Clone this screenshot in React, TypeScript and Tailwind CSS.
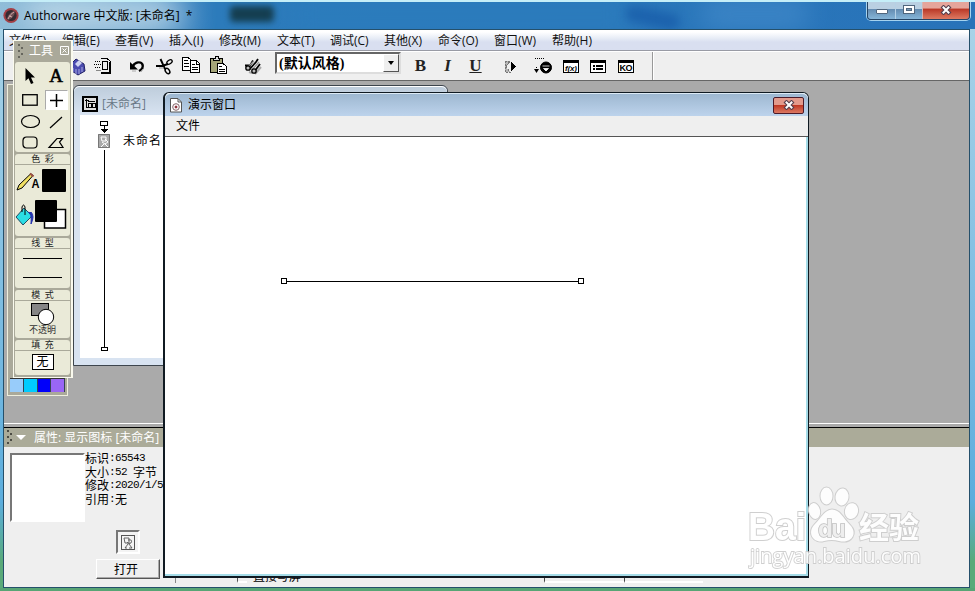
import type { ReactNode } from "react";
import clsx from "clsx";

const MENUS = [
  { label: "文件(F)", width: "w-[53px]" },
  { label: "编辑(E)", width: "w-[53px]" },
  { label: "查看(V)", width: "w-[54px]" },
  { label: "插入(I)", width: "w-[50px]" },
  { label: "修改(M)", width: "w-[58px]" },
  { label: "文本(T)", width: "w-[53px]" },
  { label: "调试(C)", width: "w-[54px]" },
  { label: "其他(X)", width: "w-[54px]" },
  { label: "命令(O)", width: "w-[56px]" },
  { label: "窗口(W)", width: "w-[58px]" },
  { label: "帮助(H)", width: "w-[53px]" },
];

const SWATCHES = ["bg-[#98ccfa]", "bg-[#00ccff]", "bg-[#0000fa]", "bg-[#9966f5]"];

function Icon({ children, w = 20, h = 20, crisp = true }: { children: ReactNode; w?: number; h?: number; crisp?: boolean }) {
  return (
    <svg
      width={w}
      height={h}
      viewBox={`0 0 ${w} ${h}`}
      fill="none"
      stroke="#000"
      className="block shrink-0"
      shapeRendering={crisp ? "crispEdges" : "auto"}
    >
      {children}
    </svg>
  );
}

function Slot({ children, className }: { children: ReactNode; className?: string }) {
  return <button className={clsx("flex h-[27px] w-[27px] shrink-0 items-center justify-center", className)}>{children}</button>;
}

function CloseX() {
  return (
    <svg width="12" height="10" viewBox="0 0 12 10">
      <path d="M3.5 2.5 L8.500 7.500 M8.500 2.500 L3.500 7.500" stroke="#553f4d" strokeWidth="4.2" strokeLinecap="square" />
      <path d="M3.5 2.5 L8.500 7.500 M8.500 2.500 L3.500 7.500" stroke="#fff" strokeWidth="2" strokeLinecap="square" />
    </svg>
  );
}

function TitleBar() {
  return (
    <div className="relative flex h-[29px] shrink-0 items-start overflow-hidden border-t-2 border-[#c5eef8] bg-linear-to-r from-[#8fbcd8] from-0% via-[#2c7bbb] via-22% to-[#2873b9] to-100%">
      <div className="absolute -top-2 left-6 h-10 w-40 rounded-full bg-[#d0e5ee] opacity-80 blur-lg" />
      <div className="absolute top-1 left-[230px] h-4 w-[44px] rounded bg-[#153e50] blur-[3px]" />
      <div className="absolute -top-2 left-[290px] h-10 w-[340px] bg-[#2c7dbd] opacity-70 blur-md" />
      <div className="absolute top-2 left-[625px] h-4 w-[55px] rotate-12 rounded-full bg-[#1355a5] opacity-60 blur-[5px]" />
      <div className="absolute -top-1 left-[700px] h-8 w-[110px] rounded-full bg-[#438bcb] opacity-70 blur-md" />
      <div className="relative flex h-[27px] items-center pl-[3px]">
        <svg width="16" height="17" viewBox="0 0 16 17">
          <circle cx="8" cy="8.5" r="7.6" fill="#a33f45" />
          <circle cx="8" cy="8.5" r="5.6" fill="#332b32" />
          <path d="M4 12 C5 8 7 5 12 4 C12 8 9 12 5 13 Z" fill="#6d4e53" />
          <path d="M5 12 C7 8 8 7 11 5 M6 9 L9 10" stroke="#d3aaa8" fill="none" />
        </svg>
        <span className="ml-[5px] text-[12px] whitespace-pre text-black">Authorware 中文版: [未命名]  *</span>
      </div>
      <div className="absolute -top-0.5 left-[867px] flex h-5 overflow-hidden rounded-b-[4px] border border-t-0 border-[#254464] shadow-[0_0_0_1px_#a5d3ef]">
        <div className="flex w-[28px] items-center justify-center border-r border-[#b5d0e5] bg-linear-to-b from-[#bad0e2] from-45% via-[#658db2] via-50% to-[#86b6d9]">
          <div className="mt-1 h-[5px] w-3 rounded-[1px] border border-[#50667d] bg-white" />
        </div>
        <div className="flex w-[27px] items-center justify-center border-r border-[#d6b5b3] bg-linear-to-b from-[#bad0e2] from-45% via-[#658db2] via-50% to-[#86b6d9]">
          <div className="flex h-[9px] w-3 items-center justify-center border border-[#50667d] bg-white">
            <div className="h-[3px] w-1.5 border border-[#50667d] bg-[#7798b4]" />
          </div>
        </div>
        <div className="flex w-[46px] items-center justify-center bg-linear-to-b from-[#e5a59b] from-40% via-[#bb3a29] via-50% to-[#dd7962]">
          <CloseX />
        </div>
      </div>
    </div>
  );
}

function MenuBar() {
  return (
    <nav className="flex h-[21px] shrink-0 items-center border-b border-[#999ba5] bg-linear-to-b from-white from-10% via-[#e8edf6] via-40% to-[#d9dff0] to-60% pt-px pl-[5px] text-[12px] text-[#111]">
      {MENUS.map((m) => (
        <span key={m.label} className={clsx("shrink-0 whitespace-nowrap", m.width)}>
          {m.label}
        </span>
      ))}
    </nav>
  );
}

function Toolbar() {
  return (
    <div className="flex h-[30px] shrink-0 items-start border-t border-b border-t-white border-b-[#666] bg-[#efefef] pl-[60px]">
      <Slot>
        <Icon crisp={false}>
          <path d="M2 9 L8 3 L16 8 L17 15 L10 19 L4 15 Z" fill="#4b4baf" stroke="#222267" />
          <path d="M7 8 L11 4 L14 7 L10 11 Z" fill="#cfd2f1" stroke="none" />
          <path d="M5 12 V16 M8 13 V18 M11 13 V18 M14 11 V16" stroke="#aaaadf" />
        </Icon>
      </Slot>
      <Slot className="-ml-[2px]">
        <Icon>
          <path d="M7.5 2.5 H14 L17.5 5.5 V17.5 H7.500" strokeWidth="1" />
          <path d="M17 6 V17 H8" strokeWidth="2" />
          <path d="M9.5 5.5 H14.5 V13.5 H9.5 Z" />
          <path d="M2 5.5 H7 M1 8.5 H8 M2 11.5 H8" strokeDasharray="1 1" />
          <path d="M3 14.5 H8" stroke="#888" />
        </Icon>
      </Slot>
      <Slot className="ml-[7px]">
        <Icon crisp={false}>
          <path d="M6 10 C8 6 14 5 15.500 8.500 C16.500 11.500 15 13.500 12 15" strokeWidth="2.4" />
          <path d="M3 6 V13.500 H11 Z" fill="#000" stroke="none" />
          <path d="M5 15 H9 M16 13 L14 16" stroke="#aaa" />
        </Icon>
      </Slot>
      <Slot>
        <Icon crisp={false}>
          <path d="M6.500 3 L11 13 M2 10 H8 L14 8" strokeWidth="1.9" />
          <path d="M5 12 L10 12" stroke="#999" />
          <ellipse cx="15.500" cy="6" rx="3" ry="1.800" transform="rotate(-35 15.500 6)" strokeWidth="1.300" />
          <ellipse cx="13.500" cy="15" rx="1.900" ry="3" transform="rotate(-35 13.500 15)" strokeWidth="1.500" />
        </Icon>
      </Slot>
      <Slot>
        <Icon>
          <path d="M1.5 1.5 H7 L10.5 4.5 V14.5 H1.5 Z" fill="#fff" />
          <path d="M3 4.5 H7 M3 7.5 H8 M3 10.5 H8" />
          <path d="M9.5 4.5 H15 L18.5 7.5 V16.5 H9.5 Z" fill="#fff" />
          <path d="M15.500 5 V8 H18 M11 8.5 H14 M11 11.5 H17 M11 13.5 H17" />
        </Icon>
      </Slot>
      <Slot>
        <Icon>
          <path d="M2.5 2.5 H14.5 V16.5 H2.5 Z" fill="#a5a578" />
          <path d="M5.5 4.5 V2 H7 V.5 H10 V2 H11.5 V4.5 Z" fill="#ddd" />
          <path d="M9.5 7.5 H15 L18.500 10.5 V17.5 H9.5 Z" fill="#fff" />
          <path d="M11 10.5 H14 M11 13.5 H17 M11 15.5 H17" />
        </Icon>
      </Slot>
      <Slot className="ml-2">
        <Icon crisp={false}>
          <path d="M12 18 L18 11 M6 16 L9 17" stroke="#aaa" strokeWidth="2" />
          <path d="M2 9.500 H7 L10 4.500 M6 14 L13 6 L15 3 M11 16 L17 8" strokeWidth="1.800" />
          <path d="M4 12 L11 5 M9 14 L16 6" stroke="#999" strokeWidth="1.300" />
          <circle cx="5" cy="12" r="2.200" fill="#bbb" strokeWidth="1.300" />
          <circle cx="11" cy="15" r="2.200" fill="#bbb" strokeWidth="1.300" />
        </Icon>
      </Slot>
      <div className="ml-[9px] flex h-[22px] w-[126px] shrink-0 border-2 border-t-[#666] border-r-[#ddd] border-b-[#ddd] border-l-[#666] bg-white">
        <span className="flex-1 pl-[2px] font-['Liberation_Serif','Noto_Sans_CJK_SC',serif] text-[14px] leading-[19px] font-bold whitespace-nowrap text-black">
          (默认风格)
        </span>
        <span className="flex h-[18px] w-4 items-center justify-center border border-t-white border-r-[#555] border-b-[#555] border-l-white bg-[#efefef]">
          <span className="border-x-[3.5px] border-t-4 border-x-transparent border-t-black" />
        </span>
      </div>
      <div className="ml-[6px] flex font-['Liberation_Serif',serif] text-[17px] leading-none font-bold text-[#222] text-shadow-[1px_1px_#aaa]">
        <Slot>B</Slot>
        <Slot className="italic">I</Slot>
        <Slot className="ml-px underline">U</Slot>
      </div>
      <Slot className="ml-2">
        <Icon>
          <path d="M4 5 H9 L5 10.500 L9 16 H4 Z" fill="#b5b5b5" stroke="#777" strokeDasharray="2 1" />
          <path d="M10 5 V16 L15 10.5 Z" fill="#000" stroke="none" />
        </Icon>
      </Slot>
      <Slot className="ml-[6px]">
        <Icon crisp={false}>
          <path d="M1 2.5 H11 M2.5 11 V14" strokeDasharray="1 1" />
          <path d="M0 13 H5 L2.5 17 Z" fill="#000" stroke="none" />
          <circle cx="12" cy="11.5" r="5.5" fill="#000" />
          <path d="M8.5 10 H15.5 M9.500 12.5 H14.500 L12 15 Z" stroke="#fff" fill="#fff" strokeWidth=".8" />
        </Icon>
      </Slot>
      <Slot>
        <Icon>
          <rect x="2.5" y="4.5" width="15" height="12" fill="#fff" />
          <path d="M2 5.5 H18" strokeWidth="3" />
          <text x="4" y="14.5" fill="#000" stroke="none" fontSize="8" fontWeight="700" fontStyle="italic" textLength="12" className="font-['Liberation_Sans',sans-serif]">f(x)</text>
        </Icon>
      </Slot>
      <Slot>
        <Icon>
          <rect x="2.5" y="4.5" width="15" height="12" fill="#fff" />
          <path d="M2 5.5 H18" strokeWidth="3" />
          <path d="M5 10 H7 M8 10 H15 M5 13 H7 M8 13 H15" strokeWidth="2" />
        </Icon>
      </Slot>
      <Slot className="ml-px">
        <Icon>
          <rect x="2.5" y="4.5" width="15" height="12" fill="#fff" />
          <path d="M2 5.5 H18" strokeWidth="3" />
          <text x="3.5" y="15" fill="#000" stroke="none" fontSize="9" fontWeight="700" textLength="13" className="font-['Liberation_Sans',sans-serif]">KO</text>
        </Icon>
      </Slot>
      <div className="ml-[13px] h-full w-0.5 border-l border-[#999] bg-white" />
    </div>
  );
}

function FlowWindow() {
  return (
    <div className="absolute top-[85px] left-[73px] flex h-[281px] w-[375px] flex-col rounded-t-md border border-[#3d454d] bg-[#d8e3f1]">
      <div className="flex h-[29px] shrink-0 items-center gap-1 rounded-t-md border-t border-white bg-linear-to-b from-[#becddc] to-[#d8e3f1] pt-[5px] pl-2">
        <Icon w={16} h={16}>
          <rect x="1" y="1" width="14" height="14" fill="#ddd" strokeWidth="2" />
          <path d="M4.500 3 V7 M3 4.500 H7 M4.500 6.500 V11.500 H6 M6.500 7.500 H9.500 V11.500 H6.500 Z M10.500 7.500 H13 V11.500 H10.500 Z M6 5.500 H13" />
        </Icon>
        <span className="text-[12px] text-[#687786]">[未命名]</span>
      </div>
      <div className="mx-[6px] mb-[7px] flex flex-1 bg-white">
        <div className="ml-[18px] flex w-3 flex-col items-center pt-[6px]">
          <Icon w={12} h={13}>
            <path d="M2.5 0.5 H9.5 V4.5 H2.5 Z M6.500 5 V10" />
            <path d="M3 8 H10 L6.5 12 Z" fill="#000" stroke="none" />
          </Icon>
          <div className="flex h-[14px] w-3 shrink-0 bg-[#aaa]">
            <Icon w={12} h={14} crisp={false}>
              <path d="M.5 .5 H11.500 V13.500 H.5 Z" stroke="#777" />
              <path d="M3 3 H8 V7 H4 Z M7 5 L10 8 L7 10 L4 8 M6 10 L3 13 M7 10 L10 13" stroke="#fff" />
            </Icon>
          </div>
          <div className="mt-0.5 w-px flex-1 bg-black" />
          <div className="mb-[7px] h-1 w-[7px] shrink-0 border border-black bg-white" />
        </div>
        <span className="mt-[18px] ml-[13px] text-[12px] leading-4 tracking-[1px] text-black">未命名</span>
      </div>
    </div>
  );
}

function PresentationWindow() {
  return (
    <div className="absolute top-[92px] left-[163px] flex h-[486px] w-[646px] flex-col rounded-t-md border-2 border-t border-r border-[#101a22] bg-white">
      <div className="flex h-[23px] shrink-0 items-center rounded-t-md border-t border-[#dceaf5] bg-linear-to-b from-[#9eb8d1] to-[#bdd3ec] pr-1 pl-1">
        <Icon w={14} h={15} crisp={false}>
          <path d="M1.5 .5 H9 L12.5 4 V14 H1.5 Z" fill="#fff" stroke="#555" />
          <path d="M9 1 V4 H12" stroke="#555" />
          <circle cx="7" cy="9" r="3.3" fill="#fff" stroke="#826469" />
          <circle cx="7" cy="9" r="1" fill="#8a2934" stroke="#8a2934" />
        </Icon>
        <span className="ml-[5px] flex-1 text-[12px] text-black">演示窗口</span>
        <button className="flex h-[17px] w-[31px] items-center justify-center rounded-xs border border-[#4c1a28] bg-linear-to-b from-[#e39a8c] from-45% via-[#c03824] via-50% to-[#db7862]">
          <CloseX />
        </button>
      </div>
      <div className="h-[21px] shrink-0 border-b border-[#555] bg-[#efefef] pl-[11px] text-[12px] leading-[19px] text-black">文件</div>
      <div className="flex flex-1 items-start border-r-2 border-b-2 border-[#a5dce8] pt-[141px] pl-[116px]">
        <div className="flex items-center">
          <span className="size-1.5 border border-black bg-white" />
          <span className="h-px w-[291px] bg-black" />
          <span className="size-1.5 border border-black bg-white" />
        </div>
      </div>
    </div>
  );
}

function Section({ title, children, className }: { title: string; children: ReactNode; className?: string }) {
  return (
    <section className={clsx("flex shrink-0 flex-col rounded-[3px] bg-[#eaead8]", className)}>
      <h2 className="h-[11px] shrink-0 border-b border-[#aaa99a] text-center text-[9px] leading-[10px] whitespace-pre text-[#222]">{title}</h2>
      {children}
    </section>
  );
}

function ToolPalette() {
  return (
    <div className="absolute top-[40px] left-[13px] flex h-[338px] w-[60px] flex-col gap-0.5 border border-r-2 border-[#fafaee] bg-[#aaa99a] px-px pb-0.5">
      <header className="flex h-[19px] shrink-0 items-center text-[12px] text-white">
        <svg width="7" height="14" viewBox="0 0 7 14" fill="#66665d" className="ml-0.5">
          <path d="M1 0h2v2H1zM4 3h2v2H4zM1 6h2v2H1zM4 9h2v2H4zM1 12h2v2H1z" />
        </svg>
        <span className="ml-[5px]">工具</span>
        <svg width="9" height="9" viewBox="0 0 9 9" stroke="#fff" fill="none" className="ml-[7px]">
          <path d="M.5 .5 H8.5 V8.5 H.5 Z M2.5 2.5 L6.5 6.5 M6.5 2.5 L2.5 6.5" />
        </svg>
      </header>
      <div className="grid h-[90px] shrink-0 grid-cols-2 grid-rows-[27px_22px_21px_20px] place-items-center rounded-[3px] bg-[#eaead8] pr-px pl-0.5">
        <Icon w={16} h={18} crisp={false}>
          <path d="M3.500 1 V14 L6.500 11.3 L9 17 L11.500 16 L9 10.5 H13 Z" fill="#000" stroke="none" />
        </Icon>
        <span className="font-['Liberation_Serif',serif] text-[19px] leading-5 text-black [-webkit-text-stroke:0.6px_#000]">A</span>
        <Icon w={16} h={12} crisp={false}>
          <rect x=".7" y=".7" width="14.500" height="10.500" strokeWidth="1.3" />
        </Icon>
        <span className="flex h-5 w-[23px] items-center justify-center border border-t-[#aaa] border-r-white border-b-white border-l-[#aaa] bg-white">
          <Icon w={13} h={13} crisp={false}>
            <path d="M6.5 0 V13 M0 6.5 H13" strokeWidth="1.5" />
          </Icon>
        </span>
        <Icon w={20} h={15} crisp={false}>
          <ellipse cx="10.500" cy="7.5" rx="9" ry="6" strokeWidth="1.2" />
        </Icon>
        <Icon w={14} h={14} crisp={false}>
          <path d="M1 13 L13 2" strokeWidth="1.200" />
        </Icon>
        <Icon w={16} h={13} crisp={false}>
          <rect x="1" y="1" width="14" height="11" rx="3.5" strokeWidth="1.2" />
        </Icon>
        <Icon w={18} h={13} crisp={false}>
          <path d="M2 11.5 L10 2.5 H15.500 L12.500 6 L16 11.5 Z" strokeWidth="1.2" />
        </Icon>
      </div>
      <Section title="色  彩" className="h-[82px]">
        <svg width="55" height="70" viewBox="0 0 55 70">
          <path d="M2 25 L4 20 L16 8.500 L18 10.500 L7 23 Z" fill="#f0df62" stroke="#000" />
          <path d="M15 8.500 L18.500 11.500" stroke="#9d5146" strokeWidth="2" />
          <text x="16.5" y="22.500" fontSize="12" fontWeight="700" textLength="8" lengthAdjust="spacingAndGlyphs" className="font-['Liberation_Sans',sans-serif]">A</text>
          <rect x="27" y="4" width="24" height="23" rx="1" />
          <path d="M1 52 L9 43 L17 51 L8 60 Z" fill="#2bdde4" stroke="#234b62" />
          <path d="M7 47 V42 Q8.5 38 10 42 V50" fill="none" stroke="#000" />
          <path d="M13 47 Q17 48 16 59 Q20 51 16 47" fill="#2533ae" stroke="#2533ae" />
          <rect x="29.5" y="44.5" width="21" height="18.500" fill="#fff" stroke="#000" strokeWidth="1.5" />
          <rect x="20" y="35" width="22" height="22" rx="1" />
        </svg>
      </Section>
      <Section title="线  型" className="h-[50px]">
        <div className="flex flex-1 flex-col gap-[18px] px-2 pt-[9px]">
          <div className="h-px shrink-0 bg-black" />
          <div className="h-px shrink-0 bg-black" />
        </div>
      </Section>
      <Section title="模  式" className="h-[48px]">
        <div className="flex flex-col items-center">
          <Icon w={26} h={25} crisp={false}>
            <rect x="1.5" y="2.5" width="17" height="12" fill="#858585" />
            <circle cx="16" cy="16" r="7.7" fill="#fff" />
          </Icon>
          <span className="-mt-[2px] text-[9px] leading-[11px] text-[#333]">不透明</span>
        </div>
      </Section>
      <Section title="填  充" className="min-h-0 flex-1">
        <div className="mx-auto mt-[3px] h-[16px] w-[22px] border border-black bg-white text-center text-[12px] leading-[14px] text-black">无</div>
      </Section>
    </div>
  );
}

function IconPalette() {
  return (
    <div className="absolute top-[84px] left-[7px] flex h-[312px] w-[61px] flex-col justify-end border border-[#eeeedd] bg-[#aaa99a] px-0.5 pb-[3px]">
      <div className="flex w-full border-t border-[#333]">
        {SWATCHES.map((c) => (
          <div key={c} className={clsx("h-[13px] flex-1 border-r border-[#344451]", c)} />
        ))}
      </div>
    </div>
  );
}

function Detail({ label, value, unit }: { label: string; value?: string; unit?: string }) {
  return (
    <p className="flex">
      <span>{label}</span>
      <span className="font-['Liberation_Mono',monospace] text-[11px] tracking-[-0.6px] whitespace-pre">:{value}</span>
      {unit && <span>{unit}</span>}
    </p>
  );
}

function PropertyPanel() {
  return (
    <div className="flex h-[160px] shrink-0 flex-col border-t border-black bg-[#efefef]">
      <div className="flex h-[19px] shrink-0 items-center bg-[#abab99] pl-0.5 text-[12px] text-white">
        <svg width="7" height="15" viewBox="0 0 7 15" fill="#4b4b44">
          <path d="M1 0h2v2H1zM4 3h2v2H4zM1 6h2v2H1zM4 9h2v2H4zM1 12h2v2H1z" />
        </svg>
        <span className="ml-[3px] border-x-[5px] border-t-[5px] border-x-transparent border-t-white" />
        <span className="ml-2 whitespace-nowrap">属性: 显示图标 [未命名]</span>
      </div>
      <div className="flex pt-[6px] pl-[6px]">
        <div className="h-[69px] w-[75px] shrink-0 border-2 border-t-[#777] border-r-white border-b-white border-l-[#777] bg-white" />
        <div className="-mt-px h-[58px] text-[12px] leading-[13.6px] whitespace-nowrap text-black">
          <Detail label="标识" value="65543" />
          <Detail label="大小" value="52 " unit="字节" />
          <Detail label="修改" value="2020/1/5" />
          <Detail label="引用" unit="无" />
        </div>
      </div>
      <div className="ml-[92px] flex w-[64px] flex-col items-center pt-[7px]">
        <div className="mt-px flex size-6 items-center justify-center border-2 border-t-[#777] border-r-white border-b-white border-l-[#777] bg-[#f4f4f4]">
          <Icon w={16} h={17} crisp={false}>
            <rect x="1.5" y="1.5" width="13" height="14" stroke="#555" />
            <path d="M4 4 H9 V9 H5 Z M8 6 Q13 5 11 9 Q8 11 7 8 M8 10 L5 14 H7 M9 10 L12 14 H9" stroke="#555" strokeWidth=".9" />
          </Icon>
        </div>
        <button className="mt-[5px] h-5 w-[64px] border border-t-white border-r-[#555] border-b-[#555] border-l-white pr-1 text-[12px] leading-[19px] text-black shadow-[inset_-1px_-1px_#aaa]">
          打开
        </button>
      </div>
      {/* controls peeking out under the presentation window */}
      <div className="-mt-[8px] flex h-3 shrink-0 items-end pl-[171px] text-[11px] leading-none text-black">
        <span className="h-2 w-px bg-[#888]" />
        <span className="ml-[61px] h-2 w-[10px] border-b-2 border-l border-b-white border-l-[#555]" />
        <span className="ml-[6px] w-[48px] text-[12px] leading-[13px] whitespace-nowrap">直接写屏</span>
        <span className="ml-[243px] h-2 w-[80px] border-b-2 border-l border-b-white border-l-[#444]" />
        <span className="h-2 w-[79px] border-b-2 border-l border-b-white border-l-[#444]" />
      </div>
    </div>
  );
}

function Watermark() {
  return (
    <svg width="180" height="90" viewBox="0 0 180 90" className="absolute top-[483px] left-[745px]" fill="#fff" stroke="#cccccc" strokeWidth="2" opacity=".92">
      <g className="font-['Liberation_Sans','Noto_Sans_CJK_SC',sans-serif] [paint-order:stroke]" fontWeight="700">
        <text x="3" y="57" fontSize="38" textLength="58" lengthAdjust="spacingAndGlyphs">Bai</text>
        <ellipse cx="69.500" cy="28" rx="5.500" ry="8" transform="rotate(-12 69.500 28)" />
        <ellipse cx="81.500" cy="13" rx="6" ry="8.500" />
        <ellipse cx="97" cy="14" rx="6.500" ry="8.500" transform="rotate(8 97 14)" />
        <ellipse cx="106.500" cy="28" rx="6.500" ry="8" transform="rotate(12 106 28)" />
        <path d="M87 26.500 C80 26.500 76 35 70 41 C61 50 69 61 79 58 Q87 56 94 58 C107 61 113 50 105 42 C98 35 95 26.500 87 26.500 Z" />
        <text x="73" y="54" fontSize="24" textLength="28" strokeWidth="1.500" fill="#eee" stroke="#bbb">du</text>
        <text x="114" y="55" fontSize="30" textLength="60">经验</text>
      </g>
      <text x="5" y="80" fontSize="20" fontWeight="500" strokeWidth="1.8" textLength="171" className="font-['Open_Sans',sans-serif] [paint-order:stroke]">jingyan.baidu.com</text>
    </svg>
  );
}

export default function App() {
  return (
    <div className="relative flex h-[591px] w-[975px] flex-col overflow-hidden bg-linear-to-b from-[#add5e8] via-[#5caddd] via-85% to-[#5aaa79] to-95% font-['Open_Sans','Noto_Sans_CJK_SC',sans-serif]">
      <TitleBar />
      <div className="mr-[5px] ml-[3px] flex flex-1 flex-col border border-[#25506b]">
        <MenuBar />
        <Toolbar />
        <div className="flex-1 border-b border-white bg-[#aaa]" />
        <div className="h-[3px] shrink-0 bg-[#aaa]" />
        <PropertyPanel />
      </div>
      <div className="h-[3px] shrink-0 bg-[#58a575]" />
      <FlowWindow />
      <IconPalette />
      <ToolPalette />
      <PresentationWindow />
      <Watermark />
    </div>
  );
}
